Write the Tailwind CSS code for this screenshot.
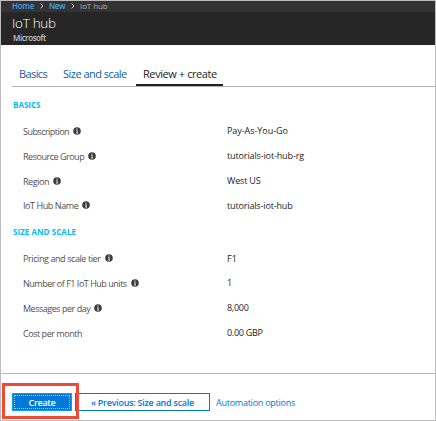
<!DOCTYPE html>
<html lang="en">
<head>
<meta charset="utf-8">
<title>IoT hub</title>
<script src="https://cdn.jsdelivr.net/npm/@tailwindcss/browser@4"></script>
</head>
<body class="bg-white">
<svg class="hidden"><symbol id="info" viewBox="0 0 8 8"><circle cx="4" cy="4" r="3.8" fill="#3c3c3c"/><path d="M4 1.4v1.2M3.4 3.4H4.1V6M3.2 6.1h1.7" fill="none" stroke="#e8e8e8" stroke-width="1"/></symbol></svg>
<div class="flex h-[421px] w-[436px] flex-col overflow-hidden border border-[#bdbdbd] font-['Open_Sans','Noto_Sans',sans-serif] text-[9px] text-[#1c1c1c]">
  <nav class="flex h-[11px] shrink-0 items-start bg-[#333] pl-[11px] text-[8px] leading-[9px] whitespace-nowrap">
    <a class="w-[28px] font-semibold tracking-[-0.3px] text-[#4ba0e0]">Home</a>
    <svg class="mt-[2px] mr-[5px] h-[6px] w-[4px]" viewBox="0 0 4 6"><path d="M.6.6 3 3 .6 5.4" fill="none" stroke="#c8c8c8"/></svg>
    <a class="w-[22px] font-semibold tracking-[-0.4px] text-[#4ba0e0]">New</a>
    <svg class="mt-[2px] mr-[5px] h-[6px] w-[4px]" viewBox="0 0 4 6"><path d="M.6.6 3 3 .6 5.4" fill="none" stroke="#c8c8c8"/></svg>
    <span class="tracking-[-0.1px] text-[#b0b0b0]">IoT hub</span>
  </nav>
  <header class="h-[33px] shrink-0 bg-[#262626] pt-[2px] pl-[11px]">
    <h1 class="h-[18px] text-[13.5px] leading-[18px] font-light tracking-[-0.3px] text-white">IoT hub</h1>
    <p class="pl-px text-[8px] leading-[11px] font-semibold tracking-[-0.45px] text-[#c4c4c4]">Microsoft</p>
  </header>
  <main class="h-[328px] shrink-0 pl-[11px]">
    <div class="flex h-[42px] items-end border-b border-[#b5b5b5] text-[11px] leading-[20px] whitespace-nowrap text-[#0f5cab]">
      <a class="h-[22px] w-[51px] pl-[7px] tracking-[-0.6px]">Basics</a>
      <a class="h-[22px] w-[73px] tracking-[-0.52px]">Size and scale</a>
      <a class="h-[22px] w-[87px] border-b-2 border-[#222] pl-[7px] tracking-[-0.42px] text-[#222]">Review + create</a>
    </div>
    <h2 class="mt-[12px] h-[20px] pl-px text-[8px] leading-[12px] font-bold text-[#00bcf2]">BASICS</h2>
    <dl class="grid grid-cols-[204px_1fr] pl-[11px] leading-[25px] whitespace-nowrap">
      <dt class="flex items-center gap-[4px] text-[#505050]"><span class="tracking-[-0.53px]">Subscription</span><svg class="mb-px size-[8px]"><use href="#info"/></svg></dt><dd class="-mt-px tracking-[-0.05px]">Pay-As-You-Go</dd>
      <dt class="flex items-center gap-[4px] text-[#505050]"><span class="tracking-[-0.48px]">Resource Group</span><svg class="mb-px size-[8px]"><use href="#info"/></svg></dt><dd class="-mt-px tracking-[-0.13px]">tutorials-iot-hub-rg</dd>
      <dt class="flex items-center gap-[4px] text-[#505050]"><span class="tracking-[-0.45px]">Region</span><svg class="mb-px size-[8px]"><use href="#info"/></svg></dt><dd class="-mt-px tracking-[-0.17px]">West US</dd>
      <dt class="-mt-px flex items-center gap-[4px] text-[#505050]"><span class="tracking-[-0.42px]">IoT Hub Name</span><svg class="mb-px size-[8px]"><use href="#info"/></svg></dt><dd class="-mt-px tracking-[-0.15px]">tutorials-iot-hub</dd>
    </dl>
    <h2 class="mt-[8px] h-[20px] pl-px text-[8px] leading-[12px] font-bold tracking-[0.05px] text-[#00bcf2]">SIZE AND SCALE</h2>
    <dl class="grid grid-cols-[204px_1fr] pl-[11px] leading-[25px] whitespace-nowrap">
      <dt class="flex items-center gap-[4px] text-[#505050]"><span class="tracking-[-0.41px]">Pricing and scale tier</span><svg class="mb-px size-[8px]"><use href="#info"/></svg></dt><dd>F1</dd>
      <dt class="flex items-center gap-[4px] text-[#505050]"><span class="tracking-[-0.48px]">Number of F1 IoT Hub units</span><svg class="mb-px size-[8px]"><use href="#info"/></svg></dt><dd class="-mt-px">1</dd>
      <dt class="flex items-center gap-[4px] text-[#505050]"><span class="tracking-[-0.48px]">Messages per day</span><svg class="mb-px size-[8px]"><use href="#info"/></svg></dt><dd class="-mt-px tracking-[-0.28px]">8,000</dd>
      <dt class="text-[#505050] tracking-[-0.46px]">Cost per month</dt><dd class="-mt-px tracking-[-0.3px]">0.00 GBP</dd>
    </dl>
  </main>
  <footer class="flex grow items-start border-t border-[#b8b8b8] pt-[19px] pl-[11px] whitespace-nowrap">
    <div class="relative h-[18px] w-[63px]">
      <button class="h-[18px] w-[60px] border border-[#0ba0f0] bg-[#0078d7] p-px font-semibold text-white"><span class="block h-[14px] border border-dotted border-[#8fd0ff] leading-[14px] tracking-[-0.3px]">Create</span></button>
      <div class="absolute -top-[10px] -left-[10px] z-10 h-[36px] w-[77px] border-3 border-[#f04a35]"></div>
    </div>
    <button class="h-[18px] w-[135px] border border-[#0078d7] leading-[18px] font-semibold tracking-[-0.25px] text-[#0078d7]">« Previous: Size and scale</button>
    <a class="ml-[6px] leading-[20px] font-medium tracking-[-0.25px] text-[#0078d7]">Automation options</a>
  </footer>
</div>
</body>
</html>
